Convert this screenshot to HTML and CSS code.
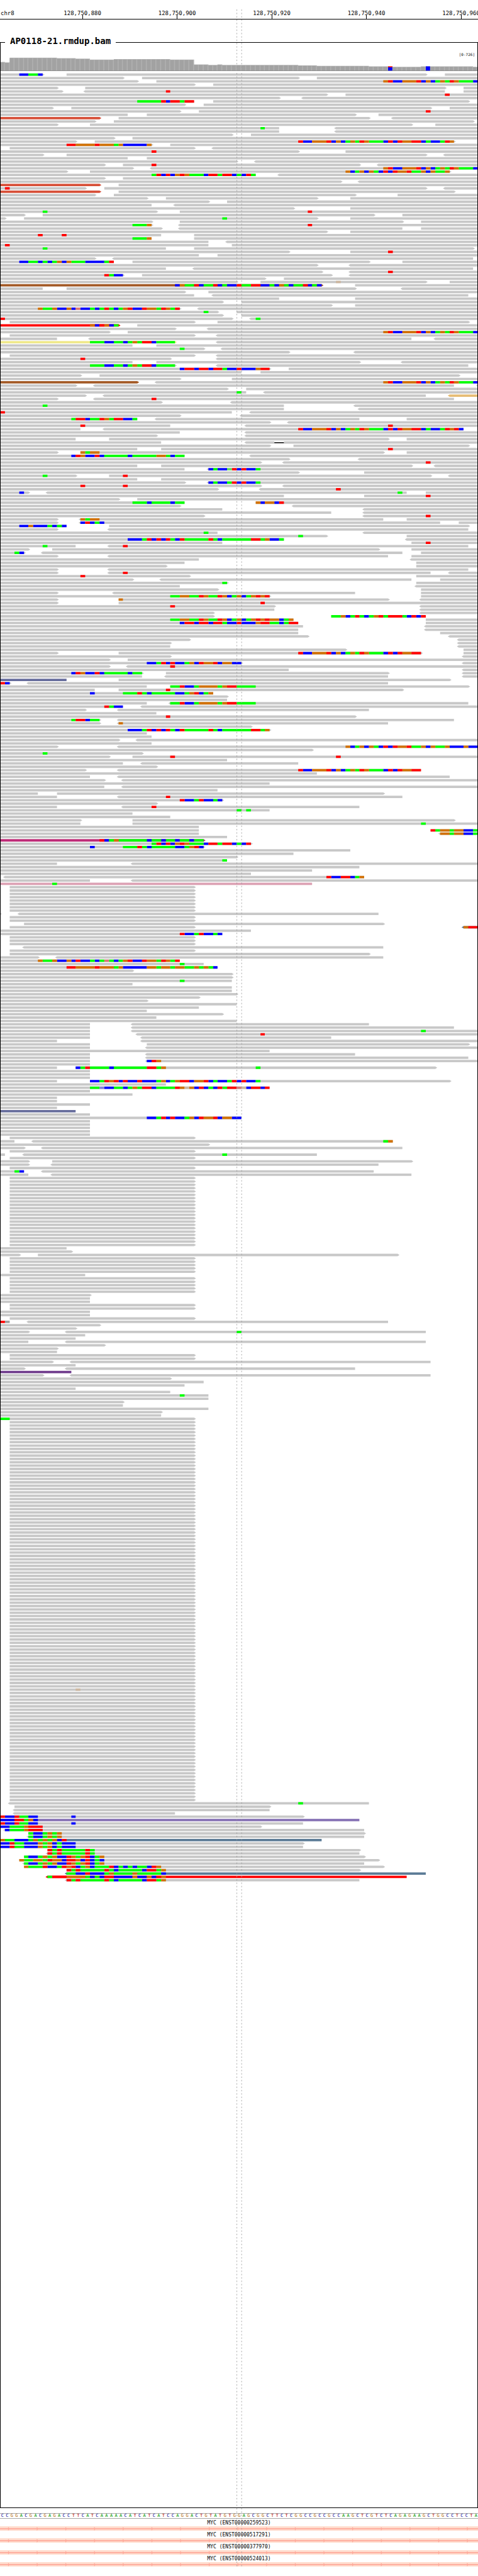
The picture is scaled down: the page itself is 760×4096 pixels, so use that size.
FILE: index.html
```html
<!DOCTYPE html>
<html lang="en">
<head>
<meta charset="utf-8">
<title>AP0118-21.rmdup.bam – chr8</title>
<link rel="stylesheet" href="styles.css">
</head>
<body>
<main class="browser">
  <header class="ruler">
    <span class="ruler-chrom">chr8</span>
    <ol class="ruler-ticks">
      <li class="tick">128,750,880</li>
      <li class="tick">128,750,900</li>
      <li class="tick">128,750,920</li>
      <li class="tick">128,750,940</li>
      <li class="tick">128,750,960</li>
    </ol>
  </header>

  <fieldset class="track">
    <legend class="track-name">AP0118-21.rmdup.bam</legend>
    <p class="track-range">[0-726]</p>
    <svg class="alignments" id="alignments" viewBox="1 120 998 5130" role="img" aria-label="Coverage and aligned reads"></svg>
  </fieldset>

  <div class="sequence" id="sequence"></div>

  <section class="genes">
    <div class="gene"><span class="gene-name">MYC (ENST00000259523)</span><svg class="gene-band" viewBox="0 0 1000 9" preserveAspectRatio="none"></svg></div>
    <div class="gene"><span class="gene-name">MYC (ENST00000517291)</span><svg class="gene-band" viewBox="0 0 1000 9" preserveAspectRatio="none"></svg></div>
    <div class="gene"><span class="gene-name">MYC (ENST00000377970)</span><svg class="gene-band" viewBox="0 0 1000 9" preserveAspectRatio="none"></svg></div>
    <div class="gene"><span class="gene-name">MYC (ENST00000524013)</span><svg class="gene-band" viewBox="0 0 1000 9" preserveAspectRatio="none"></svg></div>
  </section>

  <svg class="guides" viewBox="0 0 1000 5352" preserveAspectRatio="none" aria-hidden="true">
    <path class="guide" d="M495.5 0V5352M505.5 0V5352"/>
  </svg>
</main>
<script src="reads.js"></script>
</body>
</html>
```
FILE: styles.css
```css
body {
  margin: 0;
  background: #fff;
  color: #000;
  font-family: "DejaVu Sans Mono", monospace;
}

.browser {
  position: relative;
  padding-bottom: 15px;
  overflow: hidden;
}

/* ruler */
.ruler {
  display: flex;
  padding-top: 16px;
  border-bottom: 1px solid #000;
  font-size: 9px;
  line-height: 11px;
  overflow: hidden;
}

.ruler-chrom {
  flex: none;
  box-sizing: border-box;
  width: 7.35%;
  padding-left: 1px;
}

.ruler-ticks {
  display: flex;
  flex: none;
  width: 99%;
  margin: 0;
  padding: 0;
  list-style: none;
}

.tick {
  flex: 1;
  text-align: center;
}

.tick::after {
  content: "";
  display: block;
  width: 1px;
  height: 6px;
  margin: -3px auto 0;
  background: #000;
}

/* alignment track */
.track {
  min-width: 0;
  margin: 26px 0 0;
  padding: 0;
  border: 1px solid #000;
}

.track-name {
  margin-left: 7px;
  padding: 0 8px 4px;
  font-size: 14px;
  font-weight: bold;
  line-height: 16px;
}

.track-range {
  margin: 5px 0 0;
  padding-right: 4px;
  font-size: 6px;
  line-height: 9px;
  text-align: right;
}

.alignments {
  display: block;
  width: 100%;
  height: auto;
}

.cov-edge { fill: #b1b1b1; }
.cov-bar { fill: #a2a2a2; }
.cov-base { fill: #787878; }

.plain { fill: #c8c8c8; }
.dark { fill: #a0a0a0; }
.rust { fill: #d75039; }
.brown { fill: #a35a26; }
.red { fill: #f00; }
.khaki { fill: #f0e98c; }
.tan { fill: #e6bc74; }
.slate { fill: #666c9c; }
.magenta { fill: #be2b77; }
.rose { fill: #dda2b4; }
.violet { fill: #6f3a8c; }
.lilac { fill: #8c78b8; }
.steel { fill: #5b7b96; }
.gap { fill: #000; }

.base-A { fill: #0f0; }
.base-C { fill: #00f; }
.base-G { fill: #d17105; }
.base-T { fill: #f00; }
.base-a { fill: #64dc64; }
.base-c { fill: #8282d8; }
.base-g { fill: #cdb7a0; }
.base-t { fill: #d87878; }

/* reference sequence */
.sequence {
  display: flex;
  height: 7px;
  margin-top: 8px;
  border: solid #a8a8a8;
  border-width: 1px 0;
  font-size: 7px;
  line-height: 7px;
}

.nt {
  flex: 1 1 0;
  min-width: 0;
  text-align: center;
}

.nt-A { color: #009600; }
.nt-C { color: #000096; }
.nt-G { color: #b06400; }
.nt-T { color: #b40000; }

/* transcripts */
.gene-name {
  display: block;
  padding-top: 2px;
  font-size: 8px;
  line-height: 10px;
  text-align: center;
}

.gene-band {
  display: block;
  width: 100%;
  height: 7px;
  background: #ffdccd;
}

.gene-line { fill: #ffa99a; }

/* centre guides */
.guides {
  position: absolute;
  top: 15px;
  left: 0;
  width: 100%;
  height: calc(100% - 30px);
  pointer-events: none;
}

.guide {
  fill: none;
  stroke: #999;
  stroke-width: 1;
  stroke-dasharray: 3 4;
}
```
FILE: reads.js
```js
// Visible window: 101 bases drawn over 1000 units; one read row every 7 units.
const BASES = 101;
const ROW_TOP = 154;
const ROW_STEP = 7;
const ROW_HEIGHT = 5;

const SEQUENCE =
  "CCGGACGACGAGACCTTCATCAAAAACATCATCATCCAGGACTGTATGTGGAGCGGCTTCTCGGCCGCCGCC" +
  "AAGCTCGTCTCAGAGAAGCTGGCCTCCTA";

// [number of bases, top of the bar]
const COVERAGE = [
  [1, 130], [1, 131], [10, 121], [4, 122], [3, 123], [5, 125], [12, 124], [5, 125],
  [3, 135], [2, 136], [1, 135], [16, 136], [4, 137], [11, 138], [5, 139], [6, 140],
  [11, 139], [1, 140]
];

// Soft-clipped stretches that several reads share.
const P = "@81:GTCCGGGTCGCAGATGAAAC";
const Q = "@63:TCCGGGTCGCAGATGAAACTCTGGTT";
const U = "@73:GCAGCGACTCTGGTAAGCGAAG";
const V = "@32:ATCTCGTGAAACTTATTCACT";
const W = "@19:AAACCAACAGATTCAAAA";
const K = "@38:CTTCTTCTTACCTCCCGTT";
const N = "@27:CCCATCTCTACTAAAAATACAAAAAATTAG";
const M = "@36:AAGGAATGAATGCAGCAGTGT";
const S = "@31:CCATCTCCAGCTGGTCGGCC";
const J = "@36:AATCCAGGGGAGTTAAAA";
const H = "@26:AAATACAAAAACCAGTC";
const Y = "@38:TCCATCCAC";
const E = "@14:TATAAAAATACAAAAACTTAG";
const F = "@5:ACCAGAGCCTGAGTCAG";

// One line per row: "start-end" bars (arrowheads as < and >, colour name before
// the colon), "@start:LETTERS" mismatches, "Da-b" deletions, "Nx" repeats.
const ROWS = `0-9> @4:CCAAC 14-90> 94-101
0-26> 30-63> 67-101
0-29> 33-101 ${P}
0-41> 45-101
0-12> 18-94> 98-101
0-13> <18-94 98-101 @35:T
0-69> 73-101 @94:T
0-59> <64-101
0-41 @29:AAAAATCTTATT 45-99>
0-39> 43-101
0-11> 15-91> 95-101
0-38> 42-101 @90:T
0-27 31-75> 80-101
rust:0-21> 25-78> <83-101
0-20> 24-100>
0-12> 19-87> 92-101
0-59 @55:A <71-101
0-59 <71-101
0-49> 53-101
0-24> 28-101
0-16> 20-96> ${Q}CACCATG
0-32> @14:TTGGGGTGGGAGCCCCCG 36-101
2-41> <45-101
0-63> @32:T 73-101
0-9> 14-90> <94-101
0-27 31-101
0-50> <54-101
0-22> 26-76> @32:T <80-101
0-28> <32-101 ${P}
0-14> 19-95> ${U}
0-54 ${V}A <59-101
0-22> 26-101
0-72> <76-101
rust:0-21> 25-101
0-18> @1:T 22-90> <94-101
rust:0-21> 25-96>
0-20> 24-75> 84-101
0-31> 35-67> 74-101
0-44> 48-101
0-32 <37-101
0-62> 74-101
0-33> 38-101 @9:A @65:T
0-5> 9-79> 85-101
0-1> 5-67> 74-101 @47:A
0-32> 38-85> 89-101
0-32> @28:AAAG <38-101 @65:T
0-34> <38-85 89-101
0-69> 74-101
0-34 41-101 @8:T @13:T
0-32 @28:AAAG 41-101
0-44 <48-101
0-44 49-101 @1:T
0-35 41-100> @9:A
0-61> 74-101 @82:T
0-42 46-101
0-20> <24-100
0-24 @4:CCAACACAGCGAAACCCCAT 28-78> 85-101
0-67> <74-101
0-35 <41-100
0-68> <74-101 @82:T
0-26> @22:TACC 30-70> <74-101
0-56> 60-101
0-50> 55-90> 95-101 @71:g
brown:0-68> @37:CGAATCAATCACCTAATTCCACGACAATCAC 75-101
0-9 14-75> <85-101
0-39> 44-101
0-41 <45-99
0-59 75-101
0-47> 51-101
0-70> 75-101
0-38> @8:GAAGCCGCtCCACATACAGTCCTGGATGAT <42-101
0-46> @43:A 50-101
0-47> 51-101
0-49> <53-101 @0:T @54:A
2-41> 46-99>
red:0-25> @19:GCTGCA 29-101
0-37> <44-101
0-23> 27-101 ${P}
2-41> <46-101
0-12 <19-87 <92-101
khaki:0-37> ${W} <46-101
0-28 33-101
0-43> @38:A <47-101
0-61> <75-101
2-41> <46-101
0-36> @17:T <46-101
0-28 33-76> <85-101
0-37> ${W} <46-99
0-57> ${K} 61-101
0-51 55-101
0-17> 21-97>
0-38> 49-101
brown:0-29> <33-101 ${P}
0-16> <20-96 <101-101
0-48> 52-101
0-52 @50:A <56-101
0-18> <22-90 tan:<95-101
0-12> <20-96 @32:T
0-34> <49-101
0-60 @9:A <75-101
0-60 <76-101
0-49 @0:T <53-101
0-38> <51-101
0-29 @15:ATTCAATGATTCCA <33-76 86-101
0-57> <61-101
0-36 @17:T <52-101 @82:T
0-17 <22-98 ${Q}CACCATGTC
0-38 <52-101
0-33> <52-101
0-16 23-82> 86-101
0-34 <52-58 D58-60 60-101
0-57> 62-99>
0-29 34-101 @82:T
0-12> 17-81> @17:GAGG 86-101
0-39 @15:CTGCCTCAAAAACAAAAAGGACAA <53-101
0-61> <76-101
0-55> <60-101 @90:T
0-29 34-87> <92-101
0-39 <44-101 @44:CACCaTCTCCA
0-63> 77-101
0-16> @9:A 23-91> @26:T <95-101
0-29 34-101
0-39> <44-101 @44:CACCATCTCCA
0-55> @17:T @26:T <60-101
0-46> <55-101 @71:T
0-6> @4:C <10-86 @84:A 90-101
0-60 77-101 @90:T
0-25> 29-101
0-39 @28:AAACAAAACAA 54-101 @54:GCGGCT
0-38> <62-101
0-47 <77-101
0-70 <77-101
0-43> <77-101 @90:T
0-12> <17-81 @17:GAGG 86-101
0-12> <17-93 @17:CTCAC 97-101
0-14 @4:CCGCCCACAC 23-99>
0-12> <23-99
0-46 @43:A <77-101
0-69> @63:A 86-101
0-60 ${N}CCA <86-101
0-47 87-101 @90:T
0-16 @9:A <23-99 @26:T
0-6> 11-80> 87-101
0-5> @3:AC <9-85 89-101
0-12> <23-82 87-101
0-42 <87-101
0-39 88-101
0-35> 88-101
0-12> <23-99
0-12> <23-91 @26:T <95-101
0-40> @17:T 88-101
0-28> <34-87 93-101
0-48> @47:A 88-101
0-38 <88-101
0-46> 89-101
0-12> <24-75 89-101
0-57> ${M} 89-101
0-12> 25-82> @25:G <89-101
0-12> 25-101 @55:T
0-58> @36:T <89-101
0-58 <89-101
0-45> <89-101
0-45> 70-90 @70:AAGCATACAGTATTTACTCT
0-62 ${M}GGCAG 90-101
0-63 ${K}AACATT 90-101
0-64 <90-101
0-63 <90-101
0-63 93-101
0-65> <95-101
0-40> <97-101
0-36> <97-101
0-36 <97-101
0-73> 98-101
0-12> 25-89> ${Q} 98-101
0-36> <98-101
0-23> 27-101
0-51> ${S} <98-101
0-23> <27-101 @36:T
0-61 <98-101
0-30> @15:CTGCCTCAAAAACAA 35-82> <98-101
0-30 <35-82 <98-101
slate:0-14 25-95>
0-2> @0:TC <6-82
0-31 36-99> ${J}
0-20 25-85> @35:T
0-45 @19:C ${H}AG
0-48>
0-48
0-31 <36-99 ${J}
0-26 @22:TACC <30-101
0-18> <25-78
0-33
0-75> @35:T
0-21> @15:ATTCAA <25-96
0-21> <25-82 @25:G
0-53>
0-57> ${N}
0-31
0-32
0-25> <29-101
0-32
0-12> <25-101 ${U}CCCGCC
0-66>
0-30> @9:A
0-23> 28-101 @36:T @71:T
0-48
0-26 <30-63
0-33>
0-18> <25-89 ${Q}
0-67
0-19 <25-95
0-22> <26-101
0-57
0-22 <26-101
0-46
0-8 12-81>
0-12 <25-85 @35:T
0-47> ${Y}
0-33>
0-12 <26-76 @32:T
0-57 @50:A @52:A
0-28
0-36
0-17> 28-96>
0-17 28-101 @89:A
0-42
0-42 91-101 @91:TAGGAGGCCA
0-42 <93-101 @93:GGAGGCCA
0-48
magenta:0-43> @21:TCAGAAAAAACAACAACAACAA
0-53> ${V}
0-43> @19:C ${H}
0-74
0-62
0-50>
0-48 @47:A
0-12 <28-101
0-76
0-66
0-53
<1-77 @69:TCCTTCAG
0-19 <28-101
rose:0-66 @11:A
8x 2-41>
0-0> <4-80
2x 2-41>
5-81>
2-41> steel:<98-101 @98:GTT
0-53
0-47 ${Y}
3x 2-41>
<5-81
2-41>
2-78>
0-8> <12-81
0-38 @8:GAAGCCGCTCCACAtACAGTCCTGGATGAT
0-43 @38:A
0-46 @14:TTGGGGTGGGAGCCCCCGGAGGAGGAAGAGAC
0-28>
2x 0-49>
0-49 @38:A
0-28
2x 0-49
0-50>
0-42>
0-31>
0-50
0-42
0-31
0-47>
0-33
0-50
0-19 <28-78
0-19 <28-96
0-19 <28-101 @89:A
0-19 <29-101 @55:T
0-19 <30-70
0-12 <30-101
0-19 31-99>
0-19 <31-101
0-57
0-19 <31-75
0-19 <31-99
0-19 <31-101 @31:CTG
0-19
0-12 16-92> @16:CATAAAACAAAAAAATTAG @54:A
3x 0-19
0-12 19-95> @19:CCATGTCTCCTCCCAGCAGTTCGGTCACCATCTCCA
0-35
0-57 @19:AAcCCAACAGATTCAAAATGgGCTCACTATTtgCTTCT
0-19
0-28
2x 0-12
0-19
0-12
slate:0-16
0-19
0-51 ${S}
5x 0-19
2-41>
0-3 <7-83 @81:AG
0-44>
0-5> <9-85
2-41>
0-1 <5-67 @47:A
2-41>
0-6> 11-87>
0-6> <11-80
2-41>
0-5 @3:AC <9-79
0-6 <11-87
21x 2-41>
0-14
0-15>
0-4> 8-84>
5x 2-41>
0-18
5x 2-41>
0-19>
2x 0-19
2x 2-41>
2x 0-19
2-41>
dark:1-2 @0:T <6-82
0-21>
0-16>
0-6> <14-90 @50:A
0-18
0-16
0-6 <14-90
0-22>
0-12>
0-12
2x 2-41>
0-11> <15-91
0-16
0-5> <14-75
violet:0-15
0-9> <15-91
0-36>
0-43
0-39
0-16
0-36
0-44 @38:A
0-44
0-26>
0-26
0-44
0-34>
0-34
0-41> @0:AA
80x 2-41>
2-41> @16:g
33x 2-41>
<2-78 @63:A
3-57>
<3-57
<3-37
0-64> @0:TCCTAACC @15:C
lilac:0-76 @0:CCCTTAGC
0-64 @0:TCCTAACC @15:C
0-55> @0:CCAAAGTTT
<1-77 @1:CAAAGTTT
6-77> @6:ACCAGAG
<6-77 @6:ACCAGAG
steel:0-68 @0:GAACCCAGAGAGCT
0-64> @0:CCTAACCCGAGCACCC
0-64 @0:CCTAACCCGAGCACCC
10-76> @10:TATAAAAATA
<10-76 @10:TATAAAAATA
5-77> ${F}
4-80> @4:GAAGGATGGCTTGCTCAC
<5-77 ${F}
5-81> @5:GAAATCCATGTCAGCAAATCACACAACTG
14-76> ${E}
steel:<14-90 @14:AACCTCCCAGAAAAGAAAAAC
red:<10-86 @10:ATTTGGGGACACTTCCCCGCCGCTG
<14-76 ${E}`;

const px = base => Math.round(base * 1000 / BASES);
const box = (x0, y0, x1, y1) => `M${x0} ${y0}H${x1}V${y1}H${x0}Z`;

const layers = new Map();
function add(name, d) {
  layers.set(name, (layers.get(name) || "") + d);
}

// Coverage histogram
let at = 0;
for (const [count, top] of COVERAGE) {
  for (let i = 0; i < count; i++, at++) {
    add("cov-edge", box(px(at), top, px(at + 1), 148));
    add("cov-bar", box(px(at), top + 1, px(at + 1) - 2, 148));
  }
}
add("cov-base", box(0, 148, 1000, 149));

// Grey first so that every coloured base lies over its bar.
add("plain", "");

// Reads
let row = 0;
const marks = [];
for (const line of ROWS.split("\n")) {
  const tokens = line.split(" ");
  const times = /^\d+x$/.test(tokens[0]) ? parseInt(tokens.shift(), 10) : 1;
  for (let n = 0; n < times; n++, row++) {
    const y = ROW_TOP + row * ROW_STEP;
    const y2 = y + ROW_HEIGHT;
    for (const token of tokens) {
      let m;
      if ((m = /^@(\d+):(\w+)$/.exec(token))) {
        const start = Number(m[1]);
        const runs = m[2].match(/(.)\1*/g);
        let k = start;
        for (const run of runs) {
          marks.push(["base-" + run[0], box(px(k), y, px(k + run.length), y2)]);
          k += run.length;
        }
      } else if ((m = /^D(\d+)-(\d+)$/.exec(token))) {
        add("gap", box(px(m[1]), y + 2, px(m[2]), y + 4));
      } else if ((m = /^(?:(\w+):)?(<)?(\d+)-(\d+)(>)?$/.exec(token))) {
        const name = m[1] || "plain";
        const x0 = px(m[3]);
        const x1 = px(m[4]);
        let d = `M${x0} ${y}H${x1}`;
        d += m[5] ? `L${x1 + 4} ${y + 2.5}L${x1} ${y2}` : `V${y2}`;
        d += `H${x0}`;
        d += m[2] ? `L${x0 - 4} ${y + 2.5}Z` : "Z";
        add(name, d);
      }
    }
  }
}
for (const [name, d] of marks) add(name, d);

// Variant bases in the histogram
add("base-C", box(px(82), 141, px(83) - 1, 148) + box(px(90), 139, px(91) - 1, 148));
add("base-T", box(px(82), 139, px(83) - 1, 141));

const paths = [...layers].map(([name, d]) => `<path class="${name}" d="${d}"/>`);
document.getElementById("alignments").innerHTML = paths.join("");

// Reference letters
document.getElementById("sequence").innerHTML =
  [...SEQUENCE].map(b => `<span class="nt nt-${b}">${b}</span>`).join("");

// Transcript bands: a line with an arrowhead every 60 units
let band = box(0, 4, 1000, 6);
for (let x = 17; x < 1000; x += 60) band += `M${x} 1L${x + 3} 5L${x} 9Z`;
for (const svg of document.querySelectorAll(".gene-band")) {
  svg.innerHTML = `<path class="gene-line" d="${band}"/>`;
}
```
